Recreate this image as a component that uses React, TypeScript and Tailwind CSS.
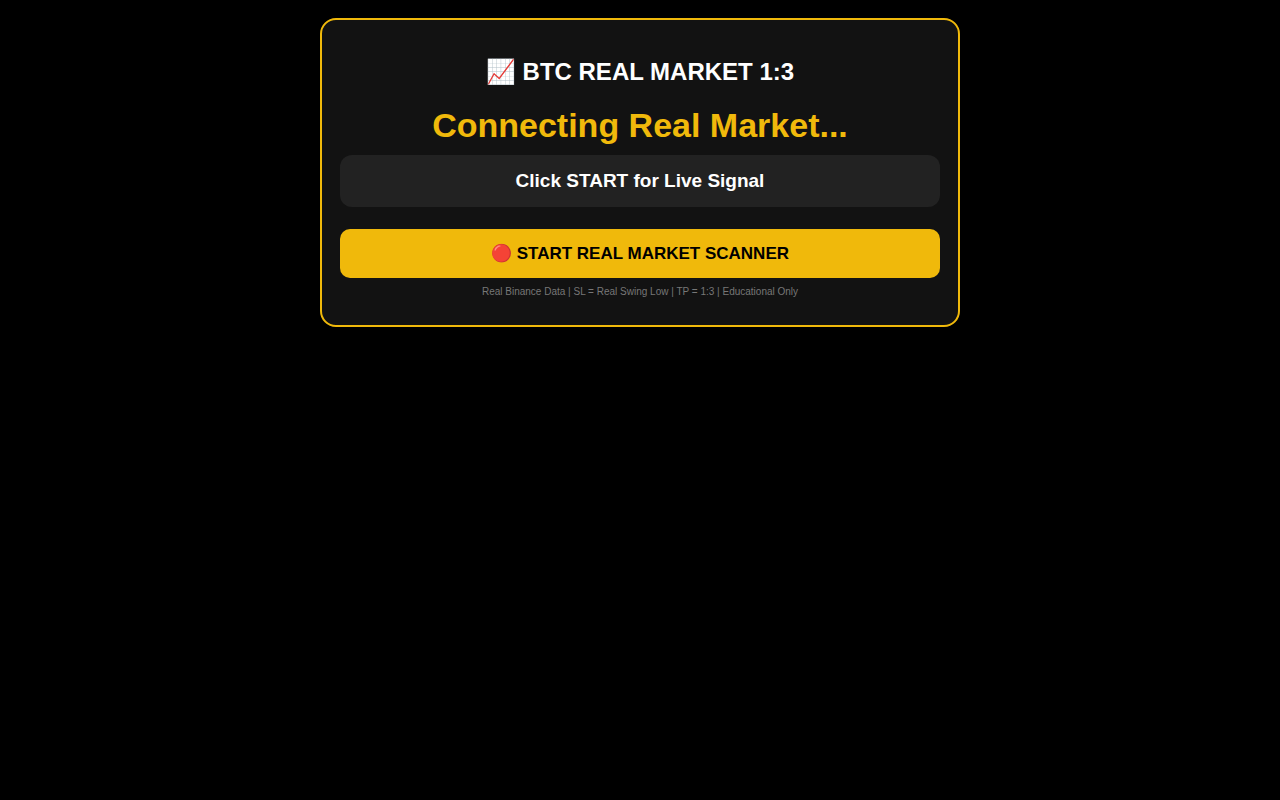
import { useState } from "react";

export default function App() {
  const [scanning, setScanning] = useState(false);

  return (
    <main className="min-h-screen bg-black px-2 py-[18px] text-center font-['Liberation_Sans',Arial,sans-serif] text-white">
      <section className="mx-auto max-w-[640px] rounded-2xl border-2 border-[#f0b90b] bg-[#121212] px-[18px] pt-[38px] pb-[27px]">
        <h1 className="text-2xl leading-7 font-bold">📈 BTC REAL MARKET 1:3</h1>
        <p className="mt-5 text-[34px] leading-[39px] font-bold text-[#f0b90b]">Connecting Real Market...</p>
        <p className="mt-[10px] rounded-xl bg-[#222] p-[15px] text-[19px] leading-[22px] font-bold">
          Click START for Live Signal
        </p>
        <button
          type="button"
          aria-pressed={scanning}
          onClick={() => setScanning(!scanning)}
          className="mt-[22px] w-full cursor-pointer rounded-[10px] bg-[#f0b90b] p-[15px] text-[17px] leading-[19px] font-bold text-black"
        >
          🔴 START REAL MARKET SCANNER
        </button>
        <p className="mt-2 text-[10px] leading-3 text-[#777]">
          Real Binance Data | SL = Real Swing Low | TP = 1:3 | Educational Only
        </p>
      </section>
    </main>
  );
}
